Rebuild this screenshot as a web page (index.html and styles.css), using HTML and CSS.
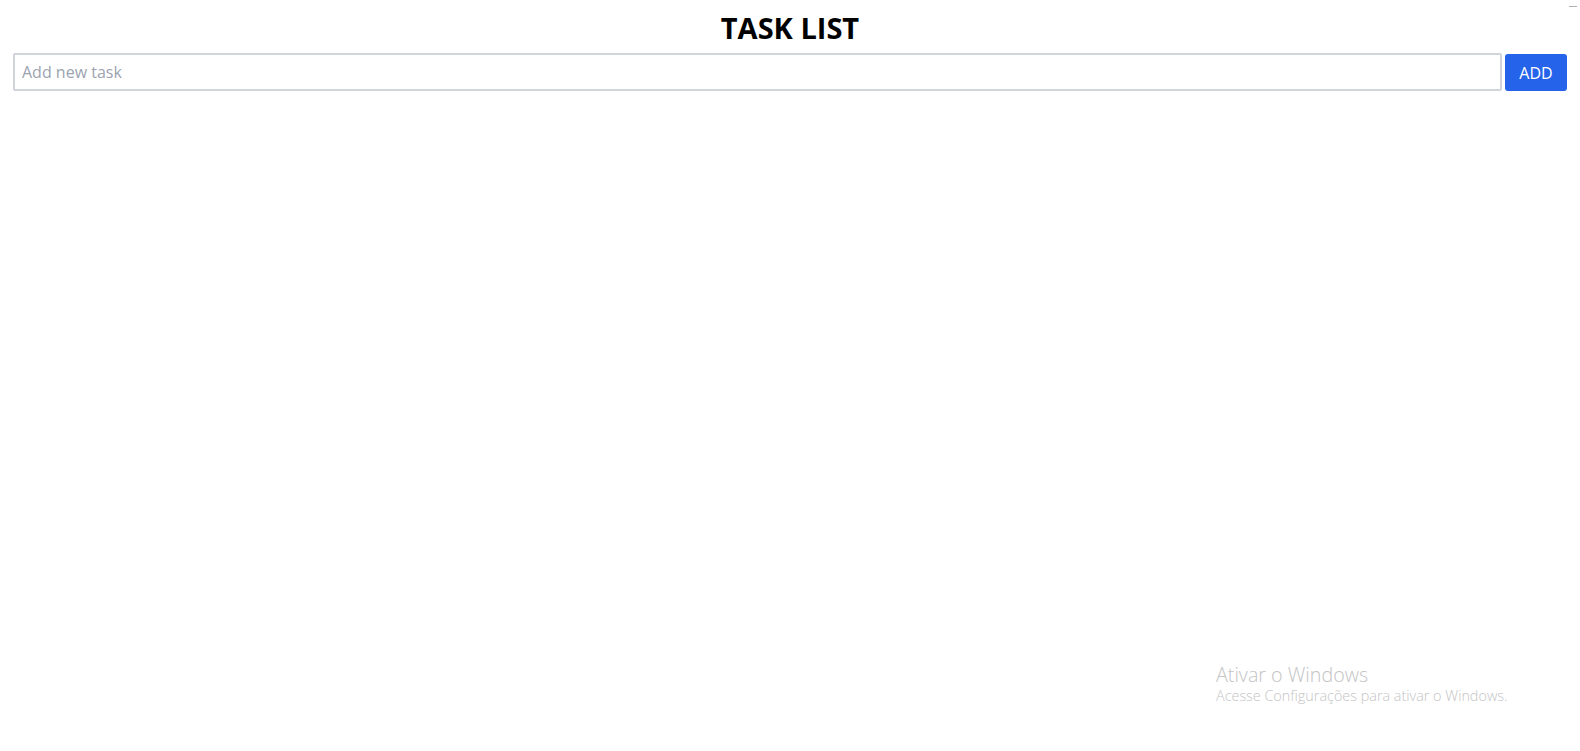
FILE: index.html
```html
<!DOCTYPE html>
<html lang="en">
<head>
<meta charset="utf-8">
<title>Task List</title>
<link rel="stylesheet" href="styles.css">
</head>
<body>
<main class="app">
  <h1 class="title">TASK LIST</h1>
  <form class="add-form">
    <input class="task-input" type="text" placeholder="Add new task">
    <button class="add-btn" type="button">ADD</button>
  </form>
</main>
<div class="corner-mark"></div>
<div class="watermark">
  <div class="wm-title">Ativar o Windows</div>
  <div class="wm-sub">Acesse Configurações para ativar o Windows.</div>
</div>
</body>
</html>
```

FILE: styles.css
```css
* { box-sizing: border-box; }
html, body { height: 100%; }
body {
  margin: 0;
  background: #fff;
  font-family: "Open Sans", "Liberation Sans", sans-serif;
  color: #000;
  overflow: hidden;
}
.app {
  padding: 0 13px;
}
.title {
  margin: 0;
  padding-top: 9px;
  height: 53px;
  text-align: center;
  font-size: 29px;
  font-weight: 700;
  line-height: 38px;
}
.add-form {
  display: flex;
  gap: 3px;
  align-items: flex-start;
}
.task-input {
  flex: 1;
  height: 38px;
  border: 2px solid #d1d5db;
  border-radius: 2px;
  padding: 0 7px;
  font-family: inherit;
  font-size: 16px;
  color: #111;
  outline: none;
}
.task-input::placeholder { color: #9ca3af; }
.add-btn {
  margin-top: 1px;
  width: 62px;
  height: 37px;
  border: none;
  border-radius: 3px;
  background: #2563eb;
  color: #fff;
  font-family: inherit;
  font-size: 16px;
  cursor: pointer;
}
.corner-mark {
  position: absolute;
  top: 6px;
  right: 3px;
  width: 8px;
  height: 1px;
  background: #b0b0b0;
}
.watermark {
  position: absolute;
  left: 1216px;
  top: 663px;
  color: #c4c4c4;
  font-family: "Open Sans", "Noto Sans", sans-serif;
  font-weight: 300;
  line-height: 1.2;
}
.wm-title { font-size: 19.7px; }
.wm-sub { font-size: 14.4px; margin-top: 0; }
```
